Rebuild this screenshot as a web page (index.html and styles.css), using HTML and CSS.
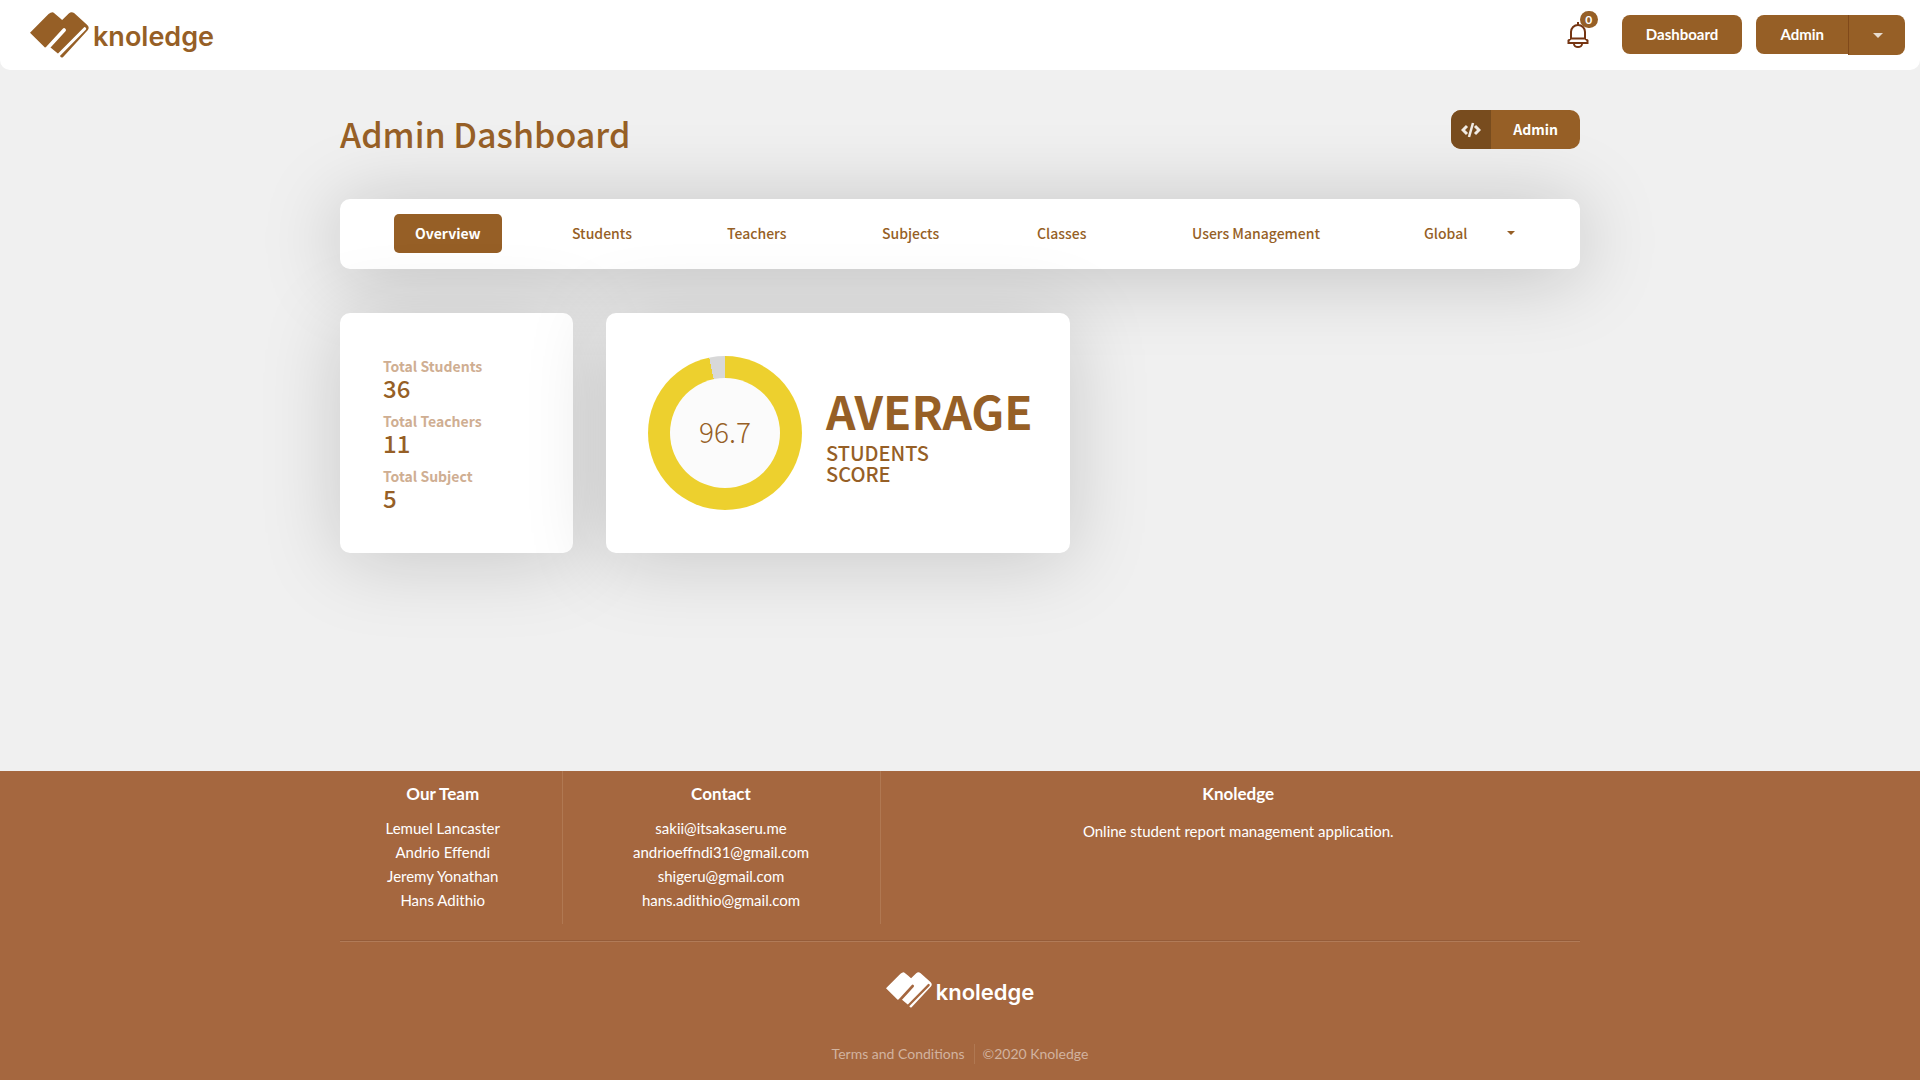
FILE: index.html
```html
<!DOCTYPE html>
<html lang="en">
<head>
<meta charset="utf-8">
<meta name="viewport" content="width=device-width, initial-scale=1">
<title>Admin Dashboard - Knoledge</title>
<link rel="stylesheet" href="styles.css">
</head>
<body>
<svg class="defs" aria-hidden="true">
  <symbol id="mark" viewBox="90 36 178 138">
    <path fill="currentColor" d="M90 98 L146 42 Q152 36 158 36 Q163 37 187 60 L207 40 Q215 33 223 39 L262 74 Q271 82 264 91 L190 171 Q185 176 181 169 L174 161 L152 143 L135 143 Z"/>
    <path class="mark-gap" d="M139 149 L193 90" stroke-width="11"/>
    <path class="mark-gap" d="M174 168 L255 86" stroke-width="9"/>
  </symbol>
</svg>

<header class="topbar">
  <a class="logo" href="#"><svg class="logo-mark" aria-hidden="true"><use href="#mark"/></svg><span>knoledge</span></a>
  <div class="actions">
    <button class="bell" type="button" aria-label="Notifications">
      <svg viewBox="0 0 22 26" width="22" height="26" fill="none" stroke="currentColor" stroke-width="2" aria-hidden="true">
        <path d="M11 0v4M4 17V10a7 7 0 0 1 14 0v7M4 16.500 L1.500 18.500V21h19v-2.500L18 16.500M4 16.500h14M7 22a4 3 0 0 0 8 0"/>
      </svg>
      <span class="badge">0</span>
    </button>
    <button class="btn" type="button">Dashboard</button>
    <div class="split">
      <button class="btn split-main" type="button">Admin</button>
      <button class="btn split-caret" type="button" aria-label="Account menu"><span class="caret"></span></button>
    </div>
  </div>
</header>

<main class="container">
  <div class="heading">
    <h1>Admin Dashboard</h1>
    <button class="role" type="button">
      <span class="role-icon"><svg viewBox="0 0 20 16" width="20" height="16" fill="none" stroke="currentColor" stroke-width="3" aria-hidden="true"><path d="M6 4L2 8l4 4M14 4l4 4-4 4"/><path d="M12 1L8 15" stroke-width="2.500"/></svg></span>
      <span class="role-text">Admin</span>
    </button>
  </div>

  <nav class="tabs">
    <a class="tab active" href="#">Overview</a>
    <a class="tab" href="#">Students</a>
    <a class="tab" href="#">Teachers</a>
    <a class="tab" href="#">Subjects</a>
    <a class="tab" href="#">Classes</a>
    <a class="tab" href="#">Users Management</a>
    <button class="tab menu" type="button">Global <span class="caret"></span></button>
  </nav>

  <div class="cards">
    <dl class="card stats">
      <div><dt>Total Students</dt><dd>36</dd></div>
      <div><dt>Total Teachers</dt><dd>11</dd></div>
      <div><dt>Total Subject</dt><dd>5</dd></div>
    </dl>
    <section class="card score">
      <div class="donut"><span>96.7</span></div>
      <h2>AVERAGE<small>STUDENTS<br>SCORE</small></h2>
    </section>
  </div>
</main>

<footer class="footer">
  <div class="container">
    <div class="columns">
      <section>
        <h3>Our Team</h3>
        <ul><li>Lemuel Lancaster</li><li>Andrio Effendi</li><li>Jeremy Yonathan</li><li>Hans Adithio</li></ul>
      </section>
      <section>
        <h3>Contact</h3>
        <ul><li>sakii@itsakaseru.me</li><li>andrioeffndi31@gmail.com</li><li>shigeru@gmail.com</li><li>hans.adithio@gmail.com</li></ul>
      </section>
      <section>
        <h3>Knoledge</h3>
        <p>Online student report management application.</p>
      </section>
    </div>
    <hr>
    <div class="logo logo-small"><svg class="logo-mark" aria-hidden="true"><use href="#mark"/></svg><span>knoledge</span></div>
    <div class="legal"><a href="#">Terms and Conditions</a><span>©2020 Knoledge</span></div>
  </div>
</footer>
</body>
</html>
```
FILE: styles.css
```css
:root {
  --brown: #965f26;
  --clay: #a5673f;
  --humanist: "Noto Sans CJK SC", "Open Sans", sans-serif;
}

* { box-sizing: border-box; }

body {
  margin: 0;
  min-height: 100vh;
  display: flex;
  flex-direction: column;
  background: #f0f0f0;
  color: var(--brown);
  font-family: Lato, sans-serif;
  font-size: 16px;
}

button { font: inherit; border: 0; cursor: pointer; }
a { color: inherit; text-decoration: none; }
h1, h2, h3, p, ul, dl, dd { margin: 0; padding: 0; }
ul { list-style: none; }

.defs { position: absolute; width: 0; height: 0; }

.container {
  width: calc(100% - 32px);
  max-width: 1240px;
  margin: 0 auto;
}

/* Top bar */
.topbar {
  display: flex;
  justify-content: space-between;
  height: 70px;
  padding: 0 15px 0 30px;
  background: #fff;
  border-radius: 0 0 10px 10px;
}

.logo {
  --gap: #fff;
  display: flex;
  align-items: center;
  gap: 4px;
  font: 600 27px/30px Inter, sans-serif;
}
.logo-mark { width: 59px; height: 46px; }
.logo span { padding-top: 4px; }
.mark-gap { fill: none; stroke: var(--gap); stroke-linecap: round; }

.actions { display: flex; align-items: flex-start; gap: 14px; padding-top: 15px; }

.btn {
  height: 39px;
  padding: 0 24px 2px;
  border-radius: 8px;
  background: var(--brown);
  color: #fff;
  font-size: 15px;
  font-weight: 700;
}
.split { display: flex; }
.split-main { border-radius: 8px 0 0 8px; }
.split-caret {
  width: 57px;
  height: 40px;
  padding-bottom: 6px;
  border-left: 1px solid #80491a;
  border-radius: 0 8px 8px 0;
  color: #e7dccf;
}
.caret {
  display: inline-block;
  border: 5px solid transparent;
  border-top-color: currentColor;
  border-bottom: 0;
}

.bell {
  position: relative;
  margin: 7px 19px 0 0;
  padding: 0;
  background: none;
  color: #753512;
}
.bell svg { display: block; }
.badge {
  position: absolute;
  top: -11px;
  left: 13px;
  width: 18px;
  border-radius: 9px;
  background: var(--brown);
  color: #fff;
  font-size: 12px;
  font-weight: 700;
  line-height: 17px;
}

/* Page heading */
.heading {
  display: flex;
  justify-content: space-between;
  align-items: flex-start;
  padding: 40px 0 41px;
}
h1 { font: 500 34px/48px var(--humanist); }

.role {
  display: flex;
  padding: 0;
  overflow: hidden;
  border-radius: 10px;
  background: var(--brown);
  color: #fff;
  font: 700 14px/39px var(--humanist);
}
.role-icon {
  display: grid;
  place-items: center;
  width: 40px;
  height: 39px;
  background: #784c1e;
  color: #f1ebe4;
}
.role-text { padding: 0 22px; }

/* Tabs */
.tabs {
  display: grid;
  grid-template-columns: repeat(5, 155px) 232px auto;
  align-items: center;
  justify-items: start;
  height: 70px;
  padding: 0 54px 2px;
  border-radius: 10px;
  background: #fff;
  box-shadow: 0 6px 80px rgba(0, 0, 0, .21);
}
.tab {
  padding: 0 23px;
  border-radius: 5px;
  background: none;
  color: var(--brown);
  font: 500 14px/39px var(--humanist);
}
.tab.active { padding: 0 21px; background: var(--brown); color: #fff; font-weight: 700; }
.tab.menu { display: flex; align-items: center; gap: 40px; }
.tab .caret { border-width: 4px 4px 0; }

/* Cards */
.cards { display: flex; flex-wrap: wrap; gap: 33px; margin-top: 44px; }
.card {
  height: 240px;
  border-radius: 10px;
  background: #fff;
  box-shadow: 0 8px 80px rgba(0, 0, 0, .17);
}
.stats {
  display: flex;
  flex-direction: column;
  justify-content: center;
  gap: 11px;
  width: 233px;
  padding: 0 43px;
  font-family: var(--humanist);
}
.stats dt { color: #cfae92; font-size: 14px; font-weight: 700; line-height: 20px; }
.stats dd { font-size: 24px; font-weight: 500; line-height: 24px; }

.score {
  display: flex;
  align-items: center;
  gap: 24px;
  width: 464px;
  padding-left: 42px;
  font-family: var(--humanist);
}
.donut {
  display: grid;
  place-items: center;
  width: 154px;
  height: 154px;
  border-radius: 50%;
  background: conic-gradient(#edd02e 96.7%, #d8d8d8 0);
}
.donut span {
  width: 110px;
  height: 110px;
  border-radius: 50%;
  background: #fbfbfb;
  font-size: 28px;
  font-weight: 300;
  line-height: 106px;
  text-align: center;
}
h2 { font-size: 46px; font-weight: 700; line-height: 48px; padding-top: 4px; }
h2 small { display: block; font-size: 20px; font-weight: 500; line-height: 21px; padding-top: 8px; }

/* Footer */
.footer {
  margin-top: auto;
  padding-bottom: 16px;
  background: var(--clay);
  color: #fff;
  text-align: center;
}
.columns {
  display: grid;
  grid-template-columns: 3fr 4fr 9fr;
  margin: 0 -16px;
}
.columns section { height: 153px; padding-top: 12px; }
.columns section:not(:last-child) { border-right: 1px solid #b07852; }
h3 { font-size: 17px; line-height: 22px; margin-bottom: 11px; }
.columns li { font-size: 15px; line-height: 24px; }
.columns p { font-size: 15px; line-height: 30px; }
hr {
  margin: 16px 0 30px;
  border: 0;
  border-top: 1px solid #955c39;
  border-bottom: 1px solid #b17b58;
}
.logo-small {
  --gap: var(--clay);
  justify-content: center;
  font-size: 22px;
}
.logo-small .logo-mark { width: 46px; height: 36px; }
.legal {
  display: flex;
  justify-content: center;
  margin-top: 36px;
  color: #d2b39f;
  font-size: 14px;
  line-height: 20px;
}
.legal a { margin-right: 8px; padding-right: 9px; border-right: 1px solid #b07852; }
```
